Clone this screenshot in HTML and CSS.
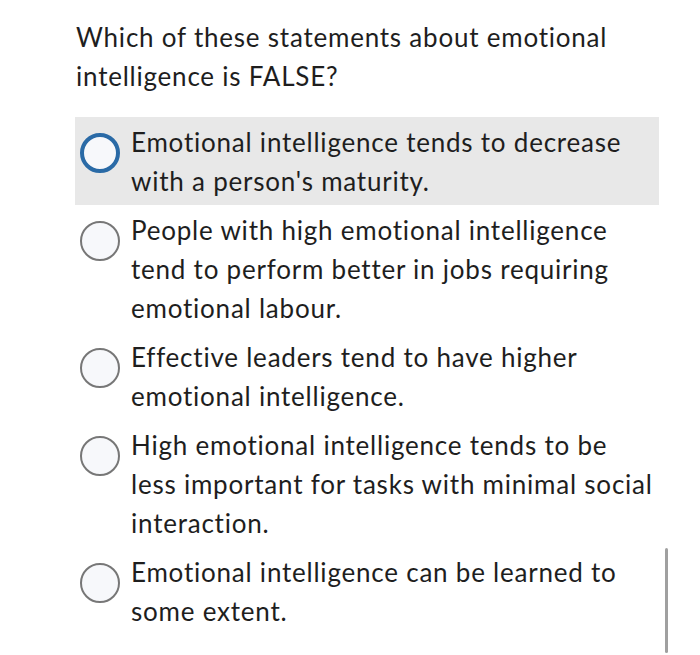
FILE: index.html
```html
<!DOCTYPE html>
<html lang="en">
<head>
<meta charset="utf-8">
<title>Question</title>
<link rel="stylesheet" href="styles.css">
</head>
<body>
<div class="page">
  <p class="question">Which of these statements about emotional intelligence is FALSE?</p>
  <div class="options">
    <label class="option focused">
      <span class="radio"></span>
      <span class="text">Emotional intelligence tends to decrease with a person's maturity.</span>
    </label>
    <label class="option">
      <span class="radio"></span>
      <span class="text">People with high emotional intelligence tend to perform better in jobs requiring emotional labour.</span>
    </label>
    <label class="option">
      <span class="radio"></span>
      <span class="text">Effective leaders tend to have higher emotional intelligence.</span>
    </label>
    <label class="option">
      <span class="radio"></span>
      <span class="text">High emotional intelligence tends to be less important for tasks with minimal social interaction.</span>
    </label>
    <label class="option">
      <span class="radio"></span>
      <span class="text">Emotional intelligence can be learned to some extent.</span>
    </label>
  </div>
  <div class="scrollbar"></div>
</div>
</body>
</html>
```

FILE: styles.css
```css
html, body {
  margin: 0;
  padding: 0;
  background: #ffffff;
}
.page {
  position: relative;
  width: 700px;
  height: 655px;
  overflow: hidden;
  font-family: Lato, "Open Sans", sans-serif;
  color: #1e1e1e;
  font-size: 26px;
  line-height: 39px;
  letter-spacing: 0.78px;
  font-variant-ligatures: none;
}
.question {
  margin: 0;
  padding: 18px 0 0 76px;
  width: 590px;
}
.options {
  display: flex;
  flex-direction: column;
  margin: 21px 0 0 75px;
  width: 584px;
}
.option {
  display: flex;
  align-items: flex-start;
  padding: 6px 0 4px;
}
.option.focused {
  background: #e8e8e8;
}
.radio {
  flex: none;
  box-sizing: border-box;
  width: 40px;
  height: 40px;
  margin: 10px 11px 0 5px;
  border-radius: 50%;
  border: 2px solid #777777;
  background: #f7f8fb;
}
.focused .radio {
  border: 4px solid #2a6aa6;
}
.text {
  flex: 1;
  margin-right: 2px;
}
.scrollbar {
  position: absolute;
  left: 665px;
  top: 548px;
  width: 3px;
  height: 105px;
  background: #a0a0a0;
  border-radius: 2px;
}
```
